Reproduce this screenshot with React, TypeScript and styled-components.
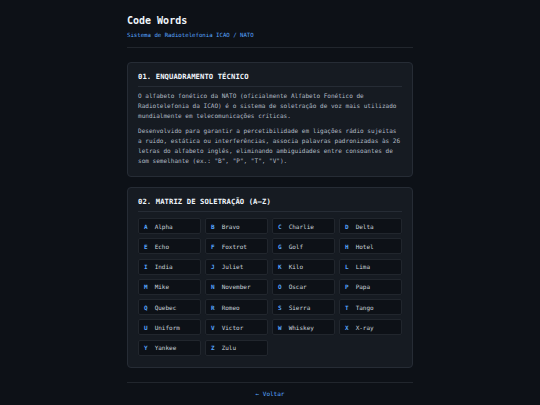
import React from 'react';
import styled, { createGlobalStyle } from 'styled-components';

const GlobalStyle = createGlobalStyle`
  html, body {
    margin: 0;
    padding: 0;
    background-color: #0d1117;
  }
  body {
    font-family: 'DejaVu Sans Mono', 'Liberation Mono', monospace;
    color: #c9d1d9;
  }
`;

const Page = styled.div`
  width: 286px;
  margin: 0 auto;
  padding-top: 15px;
  padding-bottom: 8px;
`;

const Header = styled.header`
  padding-bottom: 8px;
  border-bottom: 1px solid #21262d;
  margin-bottom: 14px;
`;

const Title = styled.h1`
  margin: 0 0 4px;
  font-size: 10px;
  line-height: 12px;
  font-weight: 700;
  color: #f0f6fc;
`;

const Subtitle = styled.p`
  margin: 0;
  font-size: 5.7px;
  line-height: 8px;
  color: #58a6ff;
`;

const Card = styled.section<{ $bottom?: number }>`
  background-color: #161b22;
  border: 1px solid #262c35;
  border-radius: 4px;
  padding: 9px 10px ${(p) => p.$bottom ?? 10}px;
  margin-bottom: 10px;
`;

const CardTitle = styled.h2`
  margin: 0 0 4px;
  padding-bottom: 4px;
  border-bottom: 1px solid #262c35;
  font-size: 7.2px;
  line-height: 10px;
  font-weight: 700;
  letter-spacing: 0.1px;
  color: #f0f6fc;
`;

const Paragraph = styled.p`
  margin: 0 0 5px;
  font-size: 6.05px;
  line-height: 10px;
  color: #b1bac4;

  &:last-child {
    margin-bottom: 0;
  }
`;

const Grid = styled.div`
  display: grid;
  grid-template-columns: repeat(4, 1fr);
  column-gap: 4px;
  row-gap: 4.3px;
  margin-top: 6px;
`;

const Cell = styled.div`
  display: flex;
  align-items: center;
  gap: 7px;
  height: 16px;
  box-sizing: border-box;
  padding: 0 5px;
  background-color: #0d1117;
  border: 1px solid #21262d;
  border-radius: 2px;
`;

const Letter = styled.span`
  font-size: 6px;
  font-weight: 700;
  color: #58a6ff;
`;

const Word = styled.span`
  font-size: 6px;
  color: #c9d1d9;
`;

const Footer = styled.footer`
  margin-top: 14px;
  padding-top: 6px;
  border-top: 1px solid #21262d;
  text-align: center;
  font-size: 6px;
  line-height: 10px;
`;

const BackLink = styled.a`
  color: #58a6ff;
  text-decoration: none;
`;

const words = [
  'Alpha', 'Bravo', 'Charlie', 'Delta', 'Echo', 'Foxtrot', 'Golf', 'Hotel',
  'India', 'Juliet', 'Kilo', 'Lima', 'Mike', 'November', 'Oscar', 'Papa',
  'Quebec', 'Romeo', 'Sierra', 'Tango', 'Uniform', 'Victor', 'Whiskey', 'X-ray',
  'Yankee', 'Zulu',
];

const App: React.FC = () => {
  return (
    <>
      <GlobalStyle />
      <Page>
        <Header>
          <Title>Code Words</Title>
          <Subtitle>Sistema de Radiotelefonia ICAO / NATO</Subtitle>
        </Header>

        <Card>
          <CardTitle>01. ENQUADRAMENTO TÉCNICO</CardTitle>
          <Paragraph>
            O alfabeto fonético da NATO (oficialmente Alfabeto Fonético de Radiotelefonia da ICAO) é o sistema de soletração de voz mais utilizado mundialmente em telecomunicações críticas.
          </Paragraph>
          <Paragraph>
            Desenvolvido para garantir a percetibilidade em ligações rádio sujeitas a ruído, estática ou interferências, associa palavras padronizadas às 26 letras do alfabeto inglês, eliminando ambiguidades entre consoantes de som semelhante (ex.: "B", "P", "T", "V").
          </Paragraph>
        </Card>

        <Card $bottom={11}>
          <CardTitle>02. MATRIZ DE SOLETRAÇÃO (A–Z)</CardTitle>
          <Grid>
            {words.map((word) => (
              <Cell key={word}>
                <Letter>{word[0]}</Letter>
                <Word>{word}</Word>
              </Cell>
            ))}
          </Grid>
        </Card>

        <Footer>
          <BackLink href="#">← Voltar</BackLink>
        </Footer>
      </Page>
    </>
  );
};

export default App;
